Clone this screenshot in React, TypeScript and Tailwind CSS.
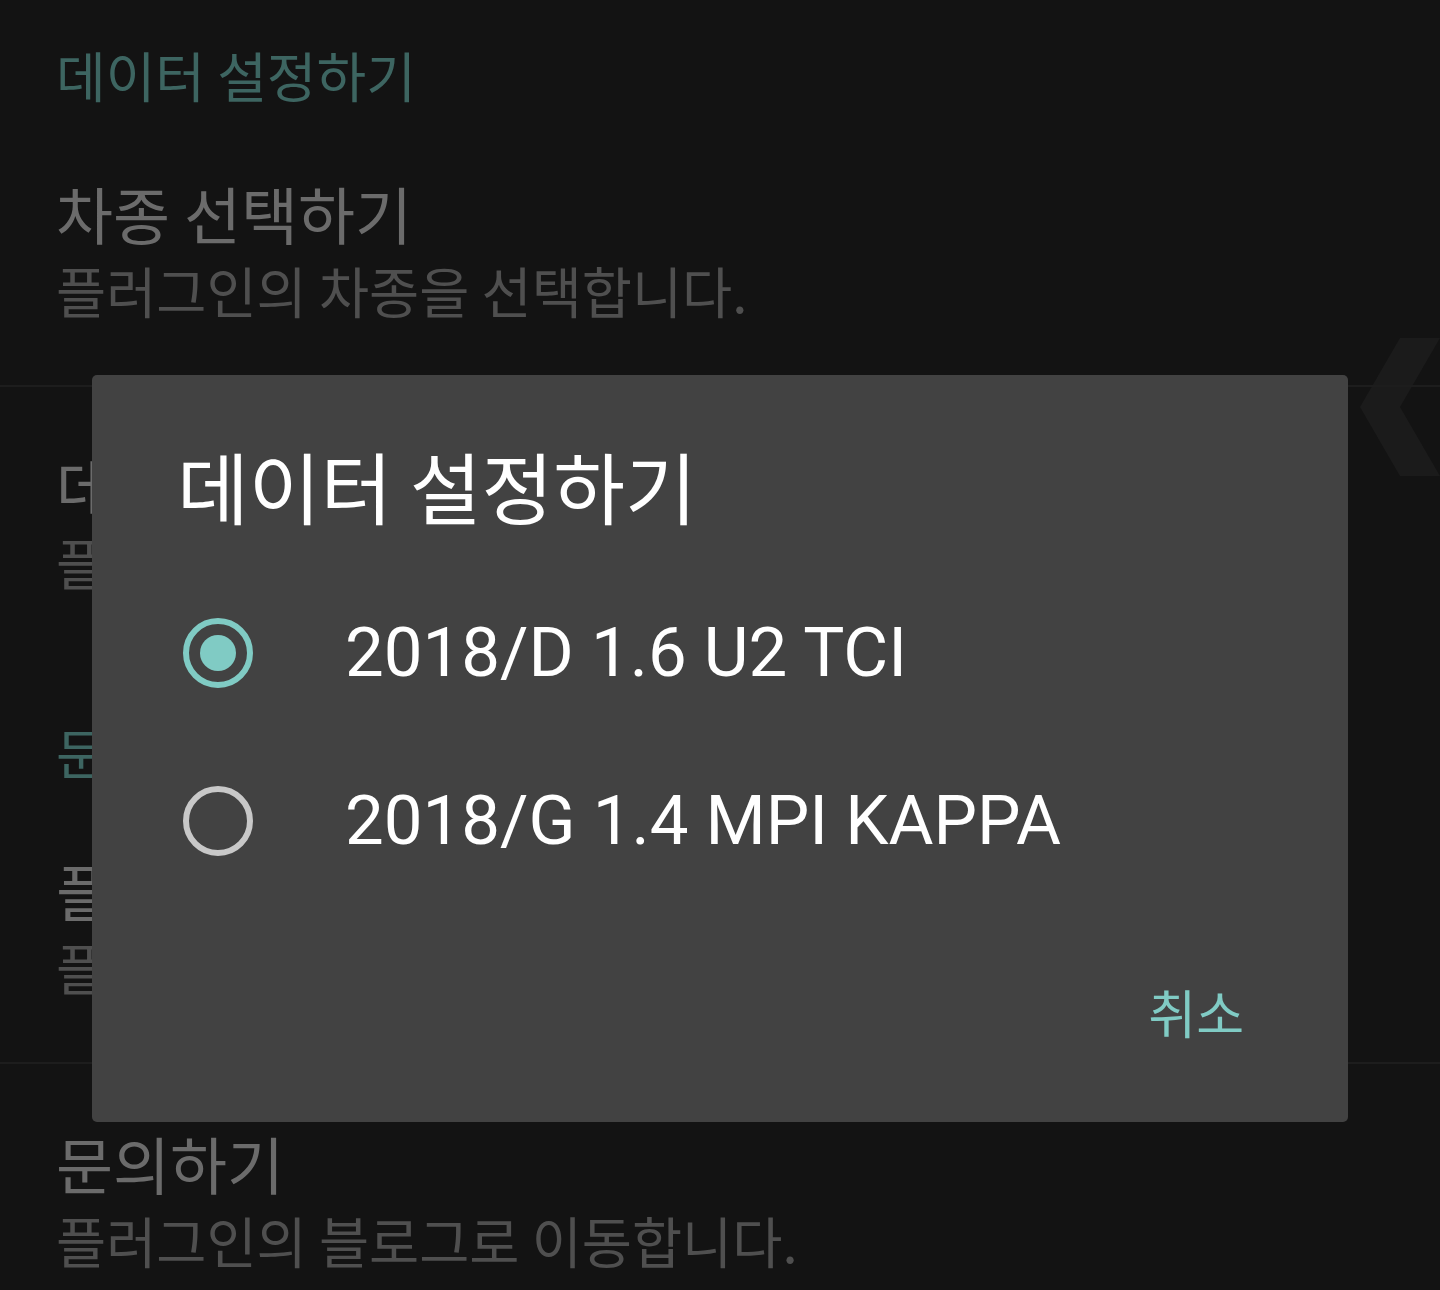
import React from "react";

const ko = { fontFamily: '"Noto Sans CJK KR", "Noto Sans", sans-serif' };
const roboto = { fontFamily: 'Roboto, "Noto Sans CJK KR", sans-serif' };

function Category({ label, className }: { label: string; className: string }) {
  return (
    <div className={`text-[54px] leading-[60px] text-[#3d6561] ${className}`}>{label}</div>
  );
}

function Pref({ title, summary, className }: { title: string; summary: string; className: string }) {
  return (
    <div className={className}>
      <div className="text-[62px] leading-[70px] text-[#6b6b6b] whitespace-nowrap">{title}</div>
      <div className="mt-[10px] text-[54.5px] leading-[64px] text-[#4f4f4f] whitespace-nowrap">{summary}</div>
    </div>
  );
}

function Radio({ checked }: { checked: boolean }) {
  return (
    <div
      className={`w-[70px] h-[70px] rounded-full border-[6px] flex items-center justify-center shrink-0 ${
        checked ? "border-[#80cbc4]" : "border-[#c8c8c8]"
      }`}
    >
      {checked && <div className="w-[36px] h-[36px] rounded-full bg-[#80cbc4]" />}
    </div>
  );
}

const options = [
  { label: "2018/D 1.6 U2 TCI", checked: true },
  { label: "2018/G 1.4 MPI KAPPA", checked: false },
];

export default function App() {
  return (
    <div className="relative h-[1290px] w-[1440px] overflow-hidden bg-[#131313]" style={ko}>
      {/* side handle */}
      <svg className="absolute left-[1360px] top-[338px]" width="80" height="138" viewBox="0 0 80 138">
        <polygon points="40,0 80,0 40,69 80,138 40,138 0,69" fill="#1b1b1b" />
      </svg>

      {/* dimmed preference list */}
      <div className="relative">
        <div className="pl-[56px]">
          <Category label="데이터 설정하기" className="pt-[45px]" />
          <Pref title="차종 선택하기" summary="플러그인의 차종을 선택합니다." className="pt-[73px]" />
        </div>
        <div className="mt-[63px] h-[2px] bg-[#1d1d1d]" />
        <div className="pl-[56px]">
          <Pref title="데이터 초기화하기" summary="플러그인의 데이터를 초기화합니다." className="pt-[63px]" />
          <Category label="문의 및 정보" className="pt-[128px]" />
          <Pref title="플러그인 정보" summary="플러그인의 버전을 확인합니다." className="pt-[73px]" />
        </div>
        <div className="mt-[63px] h-[2px] bg-[#1d1d1d]" />
        <div className="pl-[56px]">
          <Pref title="문의하기" summary="플러그인의 블로그로 이동합니다." className="pt-[64px]" />
        </div>
      </div>

      {/* dialog */}
      <div className="absolute left-[92px] top-[375px] w-[1256px] h-[747px] rounded-[5px] bg-[#424242] flex flex-col">
        <div className="pl-[85px] pt-[66px] text-[78px] leading-[88px] text-white whitespace-nowrap">
          데이터 설정하기
        </div>
        <div className="mt-[40px] flex flex-col">
          {options.map((o) => (
            <div key={o.label} className="h-[168px] flex items-center pl-[91px]">
              <Radio checked={o.checked} />
              <span className="ml-[92px] text-[69px] leading-[84px] text-white whitespace-nowrap" style={roboto}>
                {o.label}
              </span>
            </div>
          ))}
        </div>
        <div className="mt-auto mb-[78px] flex justify-end pr-[104px]">
          <span className="text-[52px] leading-[64px] text-[#80cbc4]">취소</span>
        </div>
      </div>
    </div>
  );
}
